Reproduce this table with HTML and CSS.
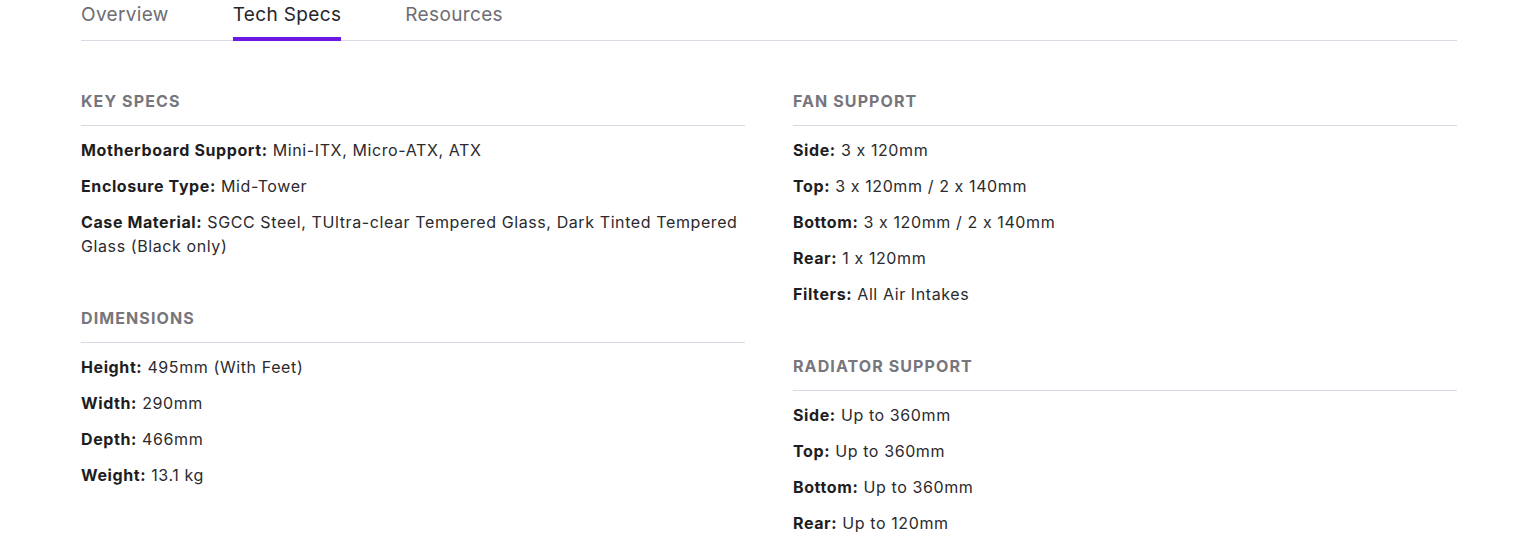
FILE: index.html
```html
<!DOCTYPE html>
<html>
<head>
<meta charset="utf-8">
<link rel="stylesheet" href="styles.css">
</head>
<body>
<div class="page">
  <nav class="tabs">
    <a class="tab">Overview</a>
    <a class="tab active">Tech Specs</a>
    <a class="tab">Resources</a>
  </nav>
  <div class="specs">
    <div class="col">
      <section class="group">
        <h3 class="group-title">KEY SPECS</h3>
        <ul class="items">
          <li><b>Motherboard Support:</b> Mini-ITX, Micro-ATX, ATX</li>
          <li><b>Enclosure Type:</b> Mid-Tower</li>
          <li><b>Case Material:</b> SGCC Steel, TUltra-clear Tempered Glass, Dark Tinted Tempered Glass (Black only)</li>
        </ul>
      </section>
      <section class="group">
        <h3 class="group-title">DIMENSIONS</h3>
        <ul class="items">
          <li><b>Height:</b> 495mm (With Feet)</li>
          <li><b>Width:</b> 290mm</li>
          <li><b>Depth:</b> 466mm</li>
          <li><b>Weight:</b> 13.1 kg</li>
        </ul>
      </section>
    </div>
    <div class="col">
      <section class="group">
        <h3 class="group-title">FAN SUPPORT</h3>
        <ul class="items">
          <li><b>Side:</b> 3 x 120mm</li>
          <li><b>Top:</b> 3 x 120mm / 2 x 140mm</li>
          <li><b>Bottom:</b> 3 x 120mm / 2 x 140mm</li>
          <li><b>Rear:</b> 1 x 120mm</li>
          <li><b>Filters:</b> All Air Intakes</li>
        </ul>
      </section>
      <section class="group">
        <h3 class="group-title">RADIATOR SUPPORT</h3>
        <ul class="items">
          <li><b>Side:</b> Up to 360mm</li>
          <li><b>Top:</b> Up to 360mm</li>
          <li><b>Bottom:</b> Up to 360mm</li>
          <li><b>Rear:</b> Up to 120mm</li>
        </ul>
      </section>
    </div>
  </div>
</div>
</body>
</html>
```
FILE: styles.css
```css
* { box-sizing: border-box; }
html, body { margin: 0; padding: 0; background: #fff; }
body {
  font-family: Inter, "Noto Sans", "Liberation Sans", sans-serif;
  font-feature-settings: "calt" 0;
  color: #2b2a2e;
}
.page {
  margin: 0 79px 0 81px;
}
.tabs {
  display: flex;
  gap: 64px;
  border-bottom: 1px solid #dcd8e3;
  height: 41px;
}
.tab {
  font-size: 19px;
  line-height: 30px;
  letter-spacing: 0.35px;
  color: #6e6d74;
  position: relative;
  height: 40px;
}
.tab.active {
  color: #26252a;
}
.tab.active::after {
  content: "";
  position: absolute;
  left: 0;
  right: 0;
  bottom: -1px;
  height: 4px;
  background: #6e17e3;
}
.specs {
  display: grid;
  grid-template-columns: 1fr 1fr;
  column-gap: 48px;
  padding-top: 48px;
}
.group + .group { margin-top: 48px; }
.group-title {
  margin: 0;
  font-size: 16px;
  line-height: 24px;
  font-weight: 700;
  color: #77767c;
  letter-spacing: 1.1px;
  padding-bottom: 12px;
  border-bottom: 1px solid #dcd8e3;
}
.items {
  list-style: none;
  margin: 12px 0 0;
  padding: 0;
  display: flex;
  flex-direction: column;
  gap: 12px;
}
.items li {
  font-size: 16px;
  line-height: 24px;
  letter-spacing: 0.6px;
  color: #2b2a2e;
}
.items b {
  font-weight: 700;
  color: #1e1d21;
}
```
